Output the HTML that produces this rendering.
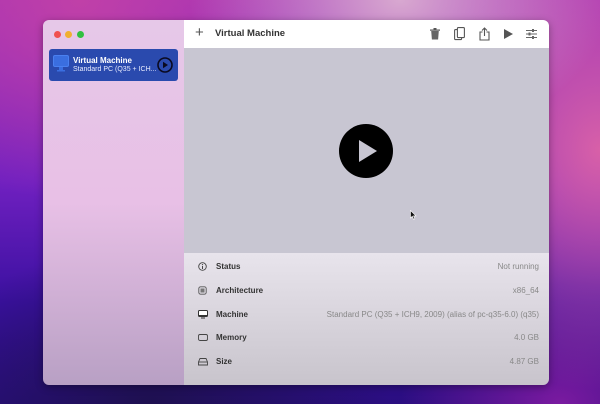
<!DOCTYPE html>
<html><head><meta charset="utf-8"><style>
*{margin:0;padding:0;box-sizing:border-box}
body{width:600px;height:404px;overflow:hidden;position:relative;font-family:"Liberation Sans",sans-serif;
background:
radial-gradient(ellipse 300px 200px at 400px 0px,#d8a8d0 0%,rgba(216,168,208,0) 70%),
radial-gradient(ellipse 250px 300px at 600px 150px,#d860a8 0%,rgba(216,96,168,0) 80%),
radial-gradient(ellipse 300px 250px at 80px 0px,#c040a8 0%,rgba(192,64,168,0) 80%),
radial-gradient(ellipse 300px 200px at 150px 404px,#1e1050 0%,rgba(30,16,80,0) 80%),
radial-gradient(ellipse 200px 150px at 560px 404px,#7a1aa0 0%,rgba(122,26,160,0) 80%),
linear-gradient(180deg,#a030b8 0%,#7020c0 45%,#3a10a0 75%,#2a0e80 100%);}
.win{position:absolute;left:43px;top:20px;width:506px;height:365px;border-radius:6px;overflow:hidden;box-shadow:0 2px 8px rgba(0,0,0,.35)}
.side{position:absolute;left:0;top:0;width:141px;height:365px;background:linear-gradient(180deg,#e6c8e8 0%,#e8c0e6 50%,#b8a0c4 100%)}
.dot{position:absolute;top:11px;width:7px;height:7px;border-radius:50%}
.item{position:absolute;left:6px;top:29px;width:129px;height:32px;background:#2a4aae;border-radius:3px}
.item .t1{position:absolute;left:24px;top:7px;font-size:8px;font-weight:bold;color:#fff}
.item .t2{position:absolute;left:24px;top:17px;font-size:7px;color:#e8ecff}
.main{position:absolute;left:141px;top:0;width:365px;height:365px}
.tb{position:absolute;left:0;top:0;width:365px;height:28px;background:#fff}
.tb .title{position:absolute;left:31px;top:8px;font-size:9.5px;font-weight:bold;color:#333}
.tb .plus{position:absolute;left:11px;top:4px;font-size:15px;color:#555;font-weight:300}
.disp{position:absolute;left:0;top:28px;width:365px;height:205px;background:#c8c6d2}
.info{position:absolute;left:0;top:233px;width:365px;height:132px;background:linear-gradient(180deg,#e8e4ec,#c8c4cc)}
.row{position:absolute;left:0;width:365px;height:14px;font-size:8px}
.row .ic{position:absolute;left:14px;top:2px}
.row .k{position:absolute;left:32px;top:2px;font-weight:bold;color:#333}
.row .v{position:absolute;right:10px;top:2px;color:#888}
</style></head><body>
<div class="win">
 <div class="side">
  <div class="dot" style="left:11px;background:#f05050"></div>
  <div class="dot" style="left:22px;background:#f0b030"></div>
  <div class="dot" style="left:34px;background:#30c040"></div>
  <div class="item">
   <svg style="position:absolute;left:4px;top:6px" width="16" height="18" viewBox="0 0 16 18"><rect x="0.5" y="0.5" width="15" height="11" rx="1.5" fill="#3a6ee0" stroke="#4a80f0"/><rect x="6" y="12" width="4" height="3" fill="#3a6ee0"/><rect x="4" y="15" width="8" height="1.5" fill="#3a6ee0"/></svg>
   <div class="t1">Virtual Machine</div>
   <div class="t2">Standard PC (Q35 + ICH...</div>
   <svg style="position:absolute;left:108px;top:8px" width="16" height="16" viewBox="0 0 16 16"><circle cx="8" cy="8" r="7" fill="none" stroke="#0a0a20" stroke-width="1.6"/><path d="M6 4.8 L11 8 L6 11.2Z" fill="#0a0a20"/></svg>
  </div>
 </div>
 <div class="main">
  <div class="tb">
   <div class="plus">+</div>
   <div class="title">Virtual Machine</div>
   <svg style="position:absolute;left:246px;top:8px" width="10" height="12" viewBox="0 0 10 12"><rect x="0" y="1.5" width="10" height="1.2" fill="#555"/><rect x="3.5" y="0" width="3" height="1.5" fill="#555"/><path d="M1.2 3 h7.6 l-0.7 8.5 h-6.2z" fill="#666"/></svg>
   <svg style="position:absolute;left:270px;top:7px" width="11" height="14" viewBox="0 0 11 14"><rect x="0.6" y="2.6" width="7" height="10" rx="1" fill="none" stroke="#555" stroke-width="1.1"/><rect x="3.4" y="0.6" width="7" height="10" rx="1" fill="#fff" stroke="#555" stroke-width="1.1"/></svg>
   <svg style="position:absolute;left:295px;top:7px" width="11" height="14" viewBox="0 0 11 14"><path d="M3.5 5 H1 V13 H10 V5 H7.5" fill="none" stroke="#555" stroke-width="1.1"/><path d="M5.5 9 V1 M3 3.5 L5.5 1 L8 3.5" fill="none" stroke="#555" stroke-width="1.1"/></svg>
   <svg style="position:absolute;left:320px;top:9px" width="9" height="10" viewBox="0 0 9 10"><path d="M0 0 L9 5 L0 10Z" fill="#555"/></svg>
   <svg style="position:absolute;left:342px;top:9px" width="11" height="10" viewBox="0 0 11 10"><path d="M0 1.5H11M0 5H11M0 8.5H11" stroke="#666" stroke-width="1"/><rect x="6" y="0" width="2" height="3" fill="#666"/><rect x="2.5" y="3.5" width="2" height="3" fill="#666"/><rect x="6" y="7" width="2" height="3" fill="#666"/></svg>
  </div>
  <div class="disp">
   <svg style="position:absolute;left:155px;top:76px" width="54" height="54" viewBox="0 0 54 54"><circle cx="27" cy="27" r="27" fill="#000"/><path d="M20 16 L38 27 L20 38Z" fill="#c8c6d2"/></svg>
   <svg style="position:absolute;left:226px;top:162px" width="7" height="10" viewBox="0 0 7 10"><path d="M0.5 0.5 V8 L2.3 6.3 L3.6 9.3 L4.8 8.8 L3.5 5.9 L6 5.9Z" fill="#111" stroke="#fff" stroke-width="0.6"/></svg>
  </div>
  <div class="info">
   <div class="row" style="top:7px"><svg class="ic" width="9" height="9" viewBox="0 0 9 9"><circle cx="4.5" cy="4.5" r="3.8" fill="none" stroke="#444" stroke-width="0.9"/><path d="M4.5 4v3" stroke="#444"/><circle cx="4.5" cy="2.6" r=".6" fill="#444"/></svg><span class="k">Status</span><span class="v">Not running</span></div>
   <div class="row" style="top:31px"><svg class="ic" width="9" height="9" viewBox="0 0 9 9"><rect x="0.8" y="0.8" width="7.4" height="7.4" rx="1.8" fill="none" stroke="#555" stroke-width="0.9"/><rect x="2.5" y="2.5" width="4" height="4" fill="#777"/></svg><span class="k">Architecture</span><span class="v">x86_64</span></div>
   <div class="row" style="top:55px"><svg class="ic" width="10" height="9" viewBox="0 0 10 9"><rect x="0.5" y="0.5" width="9" height="6" rx="1" fill="#fff" stroke="#333"/><rect x="0.5" y="5" width="9" height="1.5" fill="#333"/><rect x="3" y="7.5" width="4" height="1" fill="#333"/></svg><span class="k">Machine</span><span class="v">Standard PC (Q35 + ICH9, 2009) (alias of pc-q35-6.0) (q35)</span></div>
   <div class="row" style="top:78px"><svg class="ic" width="10" height="9" viewBox="0 0 10 9"><rect x="0.5" y="1.5" width="9" height="6" rx="1.5" fill="none" stroke="#444" stroke-width="0.9"/></svg><span class="k">Memory</span><span class="v">4.0 GB</span></div>
   <div class="row" style="top:102px"><svg class="ic" width="10" height="9" viewBox="0 0 10 9"><path d="M2 1.5h6l1.5 3.5v3h-9v-3z" fill="none" stroke="#444" stroke-width="0.9"/><path d="M0.5 5h9" stroke="#444" stroke-width="0.9"/></svg><span class="k">Size</span><span class="v">4.87 GB</span></div>
  </div>
 </div>
</div>
</body></html>
